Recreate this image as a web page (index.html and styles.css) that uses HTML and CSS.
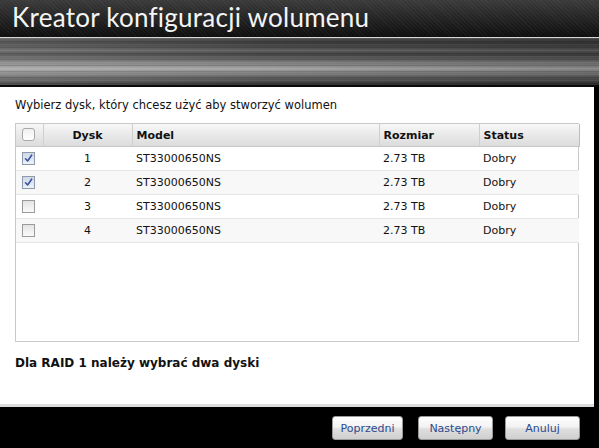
FILE: index.html
```html
<!DOCTYPE html>
<html lang="pl">
<head>
<meta charset="utf-8">
<title>Kreator konfiguracji wolumenu</title>
<link rel="stylesheet" href="styles.css">
</head>
<body>
<div class="wizard">
  <header class="title-bar">
    <h1 class="title">Kreator konfiguracji wolumenu</h1>
  </header>
  <div class="metal"></div>
  <main class="content">
    <p class="prompt">Wybierz dysk, który chcesz użyć aby stworzyć wolumen</p>
    <div class="grid">
      <table class="disks">
        <colgroup>
          <col class="c-check"><col class="c-disk"><col class="c-model"><col class="c-size"><col class="c-status">
        </colgroup>
        <thead>
          <tr>
            <th class="cell-check"><span class="cb cb-round"></span></th>
            <th class="center">Dysk</th>
            <th>Model</th>
            <th>Rozmiar</th>
            <th>Status</th>
          </tr>
        </thead>
        <tbody>
          <tr>
            <td class="cell-check"><span class="cb checked"><svg viewBox="0 0 9 9"><path d="M1.5 4.8 L3.6 7 L7.6 1.2" /></svg></span></td>
            <td class="center">1</td><td>ST33000650NS</td><td>2.73 TB</td><td>Dobry</td>
          </tr>
          <tr class="alt">
            <td class="cell-check"><span class="cb checked"><svg viewBox="0 0 9 9"><path d="M1.5 4.8 L3.6 7 L7.6 1.2" /></svg></span></td>
            <td class="center">2</td><td>ST33000650NS</td><td>2.73 TB</td><td>Dobry</td>
          </tr>
          <tr>
            <td class="cell-check"><span class="cb"></span></td>
            <td class="center">3</td><td>ST33000650NS</td><td>2.73 TB</td><td>Dobry</td>
          </tr>
          <tr class="alt">
            <td class="cell-check"><span class="cb"></span></td>
            <td class="center">4</td><td>ST33000650NS</td><td>2.73 TB</td><td>Dobry</td>
          </tr>
        </tbody>
      </table>
    </div>
    <p class="note">Dla RAID 1 należy wybrać dwa dyski</p>
  </main>
  <footer class="actions">
    <button class="btn btn-prev">Poprzedni</button>
    <button class="btn btn-next">Następny</button>
    <button class="btn btn-cancel">Anuluj</button>
  </footer>
</div>
</body>
</html>
```

FILE: styles.css
```css
html, body {
  margin: 0;
  padding: 0;
  background: #000;
}

body {
  width: 599px;
  height: 448px;
  overflow: hidden;
  font-family: "DejaVu Sans", Verdana, sans-serif;
  font-size: 11px;
  color: #111;
}

.wizard {
  display: flex;
  flex-direction: column;
  width: 599px;
  height: 448px;
}

/* dark title strip with fine diagonal texture */
.title-bar {
  box-sizing: border-box;
  height: 38px;
  border-bottom: 1px solid #d8d8d8;
  background:
    repeating-linear-gradient(45deg, rgba(255,255,255,0.035) 0 1px, rgba(0,0,0,0) 1px 3px),
    linear-gradient(#3b3b3b 0%, #262626 45%, #0e0e0e 100%);
  display: flex;
  align-items: flex-end;
}

.title {
  margin: 0 0 5px 12px;
  font-family: "Lato", "DejaVu Sans", sans-serif;
  font-weight: 400;
  font-size: 26px;
  line-height: 29px;
  color: #f4f4f4;
  letter-spacing: 0.25px;
}

/* brushed metal band */
.metal {
  height: 47px;
  border-bottom: 2px solid #0a0a0a;
  background:
    repeating-linear-gradient(180deg, rgba(255,255,255,0.07) 0 1px, rgba(0,0,0,0) 1px 3px, rgba(0,0,0,0.14) 3px 4px, rgba(0,0,0,0) 4px 6px),
    linear-gradient(90deg, rgba(255,255,255,0.14), rgba(255,255,255,0) 45%, rgba(0,0,0,0.18) 100%),
    linear-gradient(180deg, #4e4e4e 0%, #3a3a3a 12%, #5c5c5c 26%, #444 36%, #6e6e6e 48%, #8c8c8c 58%, #a4a4a4 66%, #7a7a7a 76%, #5a5a5a 86%, #333 100%);
}

.content {
  flex: 1;
  background: #fff;
  margin-right: 5px;
  padding: 11px 0 0 15px;
  border-bottom: 3px solid #dcdcdc;
}

.prompt {
  margin: 0;
  font-size: 11.5px;
  line-height: 15px;
  color: #111;
}

.grid {
  margin-top: 10px;
  width: 564px;
  height: 219px;
  border: 1px solid #c9c9c9;
  box-sizing: border-box;
  background: #fff;
}

.disks {
  width: 563px;
  border-collapse: collapse;
  table-layout: fixed;
}

.c-check { width: 27px; }
.c-disk { width: 89px; }
.c-model { width: 247px; }
.c-size { width: 100px; }
.c-status { width: 100px; }

.disks th {
  height: 22px;
  padding: 0 0 0 4px;
  text-align: left;
  font-weight: bold;
  color: #111;
  background: linear-gradient(#f7f7f7, #e6e6e6 60%, #dcdcdc);
  border-right: 1px solid #cfcfcf;
  border-bottom: 1px solid #c6c6c6;
}

.disks th:last-child {
  border-right: 1px solid #bdbdbd;
}

.disks td {
  height: 23px;
  padding: 0 0 0 4px;
  border-bottom: 1px solid #e6e6e6;
  color: #111;
}

.disks tr.alt td {
  background: #f8f8f8;
}

.disks .center {
  text-align: center;
  padding-left: 0;
}

.disks .cell-check {
  padding: 0 0 0 6px;
}

.cb {
  display: block;
  width: 11px;
  height: 11px;
  margin-top: -1px;
  border: 1px solid #9a9a9a;
  background: linear-gradient(#e4e4e4, #fafafa);
  box-sizing: content-box;
}

.cb-round {
  border-radius: 3px;
  border-color: #a8a8a8;
  background: linear-gradient(#f0f0f0, #ffffff);
}

.cb.checked {
  background: linear-gradient(#cfd8e6, #eef2f8);
  border-color: #8e99aa;
}

.cb svg {
  display: block;
  width: 9px;
  height: 9px;
  margin: 1px;
}

.cb svg path {
  fill: none;
  stroke: #3a55a0;
  stroke-width: 1.6;
  stroke-linecap: round;
  stroke-linejoin: round;
}

.note {
  margin: 14px 0 0 0;
  font-weight: bold;
  font-size: 12px;
  line-height: 14px;
  color: #111;
}

.actions {
  height: 41px;
  display: flex;
  justify-content: flex-end;
  align-items: flex-start;
  gap: 15px;
  padding: 9px 19px 0 0;
  box-sizing: border-box;
  background: #000;
}

.btn {
  height: 24px;
  padding: 0;
  border: 1px solid #9a9a9a;
  border-radius: 3px;
  background: linear-gradient(#ffffff 0%, #f2f2f2 45%, #dedede 55%, #cfcfcf 100%);
  font-family: "DejaVu Sans", Verdana, sans-serif;
  font-size: 11px;
  color: #2b4a8e;
}

.btn-prev { width: 71px; }
.btn-next { width: 75px; }
.btn-cancel { width: 75px; margin-left: -3px; }
```
